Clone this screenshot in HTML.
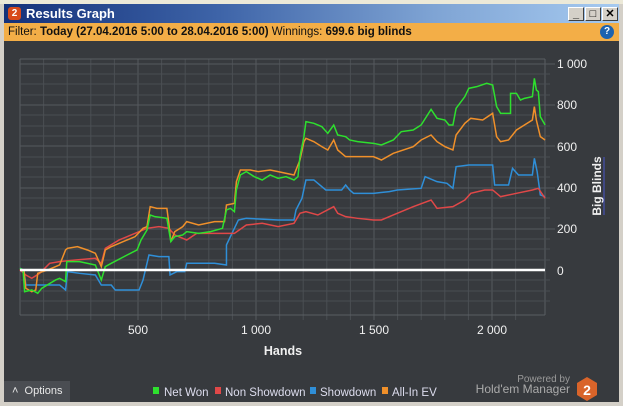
<!DOCTYPE html>
<html><head><meta charset="utf-8"><style>
*{margin:0;padding:0;box-sizing:border-box}
body{width:623px;height:406px;overflow:hidden;background:#d4d0c8;font-family:"Liberation Sans",sans-serif;position:relative}
.top{position:absolute;left:0;top:0;width:623px;height:4px;background:#ece9d8}
.title{position:absolute;left:4px;top:4px;width:615px;height:19px;background:linear-gradient(90deg,#14317a 0%,#3e64a8 35%,#7fa4d4 70%,#a6caf0 100%);color:#fff;font-weight:bold;font-size:13px;line-height:19px;padding-left:22px}
.logo{position:absolute;left:4px;top:3px;width:13px;height:13px;border-radius:3px;background:#d84a1b;color:#fff;font-size:10px;line-height:13px;text-align:center}
.btn{position:absolute;top:3px;width:16px;height:14px;background:#d4d0c8;border:1px solid;border-color:#fff #404040 #404040 #fff;color:#000;font-size:11px;line-height:12px;text-align:center;font-weight:bold}
.filter{position:absolute;left:4px;top:23px;width:615px;height:18px;background:#f3ae47;font-size:11.5px;line-height:18px;padding-left:4px;color:#111}
.filter b{font-weight:bold}
.help{position:absolute;right:5px;top:2px;width:14px;height:14px;border-radius:50%;background:#1d63b0;color:#fff;font-size:10px;font-weight:bold;text-align:center;line-height:14px}
.body{position:absolute;left:4px;top:41px;width:615px;height:361px;background:#373a3e}
.opt{position:absolute;left:4px;top:381px;width:66px;height:21px;background:#4a4d52;color:#e8e8e8;font-size:11px;line-height:21px;padding-left:8px}
</style></head><body>
<div class="top"></div>
<div class="title"><div class="logo">2</div>Results Graph
<div class="btn" style="left:564px">_</div><div class="btn" style="left:581px">□</div><div class="btn" style="left:598px">✕</div></div>
<div class="filter">Filter: <b>Today (27.04.2016 5:00 to 28.04.2016 5:00)</b> Winnings: <b>699.6 big blinds</b><div class="help">?</div></div>
<div class="body"></div>
<svg width="623" height="406" style="position:absolute;left:0;top:0" font-family="Liberation Sans, sans-serif">
<g stroke="#4a4e53" stroke-width="1">
<line x1="20" y1="59" x2="20" y2="315" stroke="#5a5e63"/>
<line x1="43.6" y1="59" x2="43.6" y2="320"/><line x1="67.2" y1="59" x2="67.2" y2="320"/><line x1="90.8" y1="59" x2="90.8" y2="320"/><line x1="114.4" y1="59" x2="114.4" y2="320"/>
<line x1="138" y1="59" x2="138" y2="320" stroke="#55595e"/>
<line x1="161.6" y1="59" x2="161.6" y2="320"/><line x1="185.2" y1="59" x2="185.2" y2="320"/><line x1="208.8" y1="59" x2="208.8" y2="320"/><line x1="232.4" y1="59" x2="232.4" y2="320"/>
<line x1="256" y1="59" x2="256" y2="320" stroke="#55595e"/>
<line x1="279.6" y1="59" x2="279.6" y2="320"/><line x1="303.2" y1="59" x2="303.2" y2="320"/><line x1="326.8" y1="59" x2="326.8" y2="320"/><line x1="350.4" y1="59" x2="350.4" y2="320"/>
<line x1="374" y1="59" x2="374" y2="320" stroke="#55595e"/>
<line x1="397.6" y1="59" x2="397.6" y2="320"/><line x1="421.2" y1="59" x2="421.2" y2="320"/><line x1="444.8" y1="59" x2="444.8" y2="320"/><line x1="468.4" y1="59" x2="468.4" y2="320"/>
<line x1="492" y1="59" x2="492" y2="320" stroke="#55595e"/>
<line x1="515.6" y1="59" x2="515.6" y2="320"/>
<line x1="545" y1="59" x2="545" y2="315" stroke="#5a5e63"/>
<line x1="20" y1="59" x2="545" y2="59" stroke="#5a5e63"/>
<line x1="20" y1="315" x2="545" y2="315" stroke="#5a5e63"/>
<line x1="20" y1="74" x2="550" y2="74"/><line x1="20" y1="84" x2="550" y2="84"/><line x1="20" y1="95" x2="550" y2="95"/>
<line x1="20" y1="105" x2="555" y2="105" stroke="#55595e"/>
<line x1="20" y1="115" x2="550" y2="115"/><line x1="20" y1="126" x2="550" y2="126"/><line x1="20" y1="136" x2="550" y2="136"/>
<line x1="20" y1="146" x2="555" y2="146" stroke="#55595e"/>
<line x1="20" y1="157" x2="550" y2="157"/><line x1="20" y1="167" x2="550" y2="167"/><line x1="20" y1="177" x2="550" y2="177"/>
<line x1="20" y1="188" x2="555" y2="188" stroke="#55595e"/>
<line x1="20" y1="198" x2="550" y2="198"/><line x1="20" y1="208" x2="550" y2="208"/><line x1="20" y1="218" x2="550" y2="218"/>
<line x1="20" y1="229" x2="555" y2="229" stroke="#55595e"/>
<line x1="20" y1="239" x2="550" y2="239"/><line x1="20" y1="249" x2="550" y2="249"/><line x1="20" y1="260" x2="550" y2="260"/>
<line x1="20" y1="280" x2="550" y2="280"/><line x1="20" y1="291" x2="550" y2="291"/><line x1="20" y1="301" x2="550" y2="301"/>
<line x1="20" y1="64" x2="555" y2="64" stroke="#55595e"/>
</g>
<g transform="translate(0,50) scale(0.3973,0.3333)" fill="none" stroke-width="1.5">
<polyline vector-effect="non-scaling-stroke" stroke="#2f8fd8" points="50,655 60,660 65,705 150,705 165,720 170,665 200,670 240,675 255,705 280,705 290,720 350,720 360,690 375,615 400,620 425,620 428,675 445,665 465,665 470,640 540,640 570,645 570,585 600,510 620,505 700,510 740,510 745,480 760,445 770,390 790,390 800,400 820,420 860,420 870,405 880,420 890,430 940,430 980,425 1000,420 1060,415 1070,380 1100,395 1125,400 1140,415 1148,350 1180,345 1240,345 1245,405 1280,405 1290,355 1305,375 1340,375 1345,325 1352,365 1360,435 1372,440"/>
<polyline vector-effect="non-scaling-stroke" stroke="#e04848" points="50,660 65,675 80,685 100,670 125,640 150,635 190,630 240,625 255,640 265,595 300,570 340,550 370,535 400,530 425,535 440,555 470,570 495,550 540,550 590,550 620,525 660,520 700,530 740,520 755,490 770,485 800,495 840,470 850,490 870,500 900,505 940,510 960,510 990,495 1040,470 1085,450 1100,475 1140,470 1170,450 1185,430 1220,420 1240,420 1260,440 1300,430 1340,420 1355,415 1372,445"/>
<polyline vector-effect="non-scaling-stroke" stroke="#f0902a" points="50,658 60,660 65,715 80,725 90,720 95,670 120,660 150,645 165,600 170,595 195,590 220,600 240,610 255,650 265,600 280,590 300,580 340,560 360,535 370,530 378,470 395,475 420,475 425,520 430,575 440,545 460,530 470,515 500,525 540,515 565,515 570,465 590,460 595,395 605,360 630,360 650,365 680,360 700,365 740,375 755,330 765,275 770,265 790,275 810,290 825,300 840,270 850,300 870,320 900,320 940,320 960,330 990,310 1040,290 1060,270 1085,255 1100,275 1120,290 1140,300 1148,255 1170,220 1185,205 1215,210 1240,190 1250,260 1260,275 1280,270 1300,240 1320,225 1340,210 1345,170 1350,210 1360,260 1372,270"/>
<polyline vector-effect="non-scaling-stroke" stroke="#2ee02e" points="50,655 58,660 62,725 80,720 95,730 105,715 140,690 150,685 165,695 168,635 200,635 240,645 255,690 265,650 280,640 320,615 345,600 355,570 370,540 378,495 390,500 420,505 425,540 430,575 440,560 460,555 470,545 500,550 530,545 560,535 570,480 580,475 590,485 595,420 605,375 620,365 640,380 660,390 680,375 700,385 720,380 740,390 750,380 755,320 765,260 770,215 790,220 810,230 825,250 840,225 850,255 870,260 880,270 900,275 940,280 960,285 990,270 1010,245 1040,240 1060,225 1085,178 1100,205 1120,210 1130,225 1140,225 1148,175 1170,140 1180,115 1200,110 1225,100 1240,105 1250,170 1260,190 1285,190 1285,130 1300,130 1310,150 1320,145 1340,140 1345,85 1350,120 1355,125 1360,200 1372,225"/>
</g>
<line x1="20" y1="270" x2="545" y2="270" stroke="#fff" stroke-width="2.5"/>
<g fill="#f0f0f0" font-size="12">
<text x="557" y="68">1 000</text><text x="557" y="109">800</text><text x="557" y="151">600</text><text x="557" y="192">400</text><text x="557" y="233">200</text><text x="557" y="275">0</text>
<text x="138" y="334" text-anchor="middle">500</text><text x="256" y="334" text-anchor="middle">1 000</text><text x="374" y="334" text-anchor="middle">1 500</text><text x="492" y="334" text-anchor="middle">2 000</text>
<text x="283" y="355" text-anchor="middle" font-weight="bold" font-size="12.5">Hands</text>
<text transform="translate(601,186) rotate(-90)" text-anchor="middle" font-weight="bold" font-size="12">Big Blinds</text>
</g>
<line x1="604" y1="157" x2="604" y2="215" stroke="#4a56c8" stroke-width="1"/>
<g font-size="11.5" fill="#dde">
<rect x="153" y="387" width="6" height="7" fill="#2ee02e"/><text x="164" y="396">Net Won</text>
<rect x="215" y="387" width="6" height="7" fill="#e04848"/><text x="225" y="396">Non Showdown</text>
<rect x="310" y="387" width="6" height="7" fill="#2f8fd8"/><text x="320" y="396">Showdown</text>
<rect x="382" y="387" width="6" height="7" fill="#f0902a"/><text x="392" y="396">All-In EV</text>
</g>
<text x="570" y="382" text-anchor="end" font-size="10" fill="#999">Powered by</text>
<text x="570" y="393" text-anchor="end" font-size="12" fill="#aaa">Hold'em Manager</text>
<polygon points="587,377 597,383 597,395 587,401 577,395 577,383" fill="#d9642a"/>
<text x="587" y="395" text-anchor="middle" font-size="14" font-weight="bold" fill="#fff">2</text>
</svg>
<div class="opt">˄&nbsp;&nbsp;Options</div>
</body></html>
